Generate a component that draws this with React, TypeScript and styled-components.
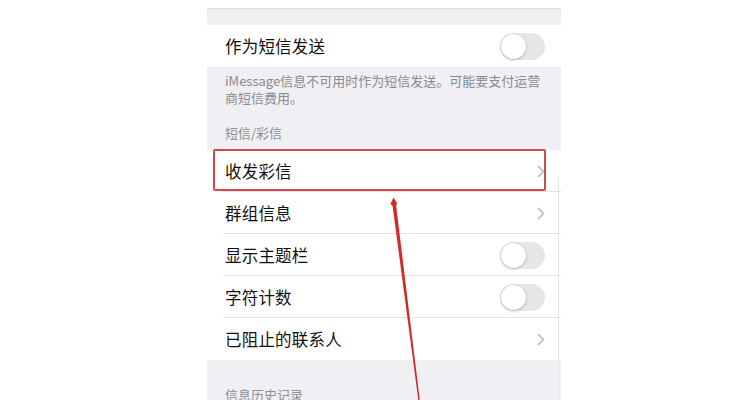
import React from "react";
import styled, { createGlobalStyle } from "styled-components";

const Global = createGlobalStyle`
  html, body { margin: 0; padding: 0; background: #ffffff; }
  body { font-family: "Noto Sans CJK SC", "Noto Sans", sans-serif; -webkit-font-smoothing: antialiased; }
`;

const Page = styled.div`
  position: relative;
  width: 750px;
  height: 400px;
  overflow: hidden;
  background: #ffffff;
  display: flex;
  padding-left: 207px;
  box-sizing: border-box;
`;

const Screen = styled.div`
  position: relative;
  width: 354px;
  height: 400px;
  background: #efeff4;
  display: flex;
  flex-direction: column;
`;

const TopStub = styled.div`
  height: 8px;
  background: #ffffff;
  border-bottom: 1px solid #dcdce0;
  flex: none;
`;

const Group = styled.div<{ $top: number }>`
  margin-top: ${(p) => p.$top}px;
  background: #ffffff;
  display: flex;
  flex-direction: column;
  flex: none;
`;

const Row = styled.div<{ $sep?: boolean }>`
  position: relative;
  height: 42px;
  display: flex;
  align-items: center;
  justify-content: space-between;
  padding: 0 16px 0 18px;
  box-sizing: border-box;
  &::after {
    content: "";
    display: ${(p) => (p.$sep ? "block" : "none")};
    position: absolute;
    left: 16px;
    right: 0;
    bottom: 0;
    height: 1px;
    background: #e2e2e5;
  }
`;

const Label = styled.span`
  font-size: 16.5px;
  color: #111111;
  letter-spacing: 0.2px;
`;

const Track = styled.div`
  width: 45px;
  height: 27px;
  border-radius: 14px;
  background: #e6e6e9;
  position: relative;
  flex: none;
`;

const Thumb = styled.div`
  position: absolute;
  left: 1px;
  top: 1px;
  width: 25px;
  height: 25px;
  border-radius: 50%;
  background: #ffffff;
  box-shadow: 0 1px 3px rgba(0, 0, 0, 0.22), 0 0 0 0.5px rgba(0, 0, 0, 0.05);
`;

const Footer = styled.div`
  margin: 5px 0 0;
  padding: 0 14px 0 18px;
  font-size: 13px;
  line-height: 17px;
  color: #8a8a8f;
  flex: none;
  white-space: nowrap;
`;

const Header = styled.div<{ $top: number }>`
  margin-top: ${(p) => p.$top}px;
  padding: 0 18px;
  font-size: 13px;
  line-height: 16px;
  color: #8e8e93;
  flex: none;
`;

const Highlight = styled.div`
  position: absolute;
  left: 6px;
  top: 149px;
  width: 333px;
  height: 42px;
  border: 2px solid #d4474a;
  border-radius: 2px;
  box-sizing: border-box;
  pointer-events: none;
`;

const EdgeLine = styled.div`
  position: absolute;
  left: 351px;
  top: 178px;
  width: 1px;
  bottom: 0;
  background: #e4e4e8;
`;

const ArrowSvg = styled.svg`
  position: absolute;
  left: 0;
  top: 0;
  pointer-events: none;
`;

const Chevron = () => (
  <svg width="8" height="13" viewBox="0 0 8 13">
    <path d="M1.5 1.5 L6.5 6.5 L1.5 11.5" fill="none" stroke="#c4c4c8" strokeWidth="1.8" strokeLinecap="round" strokeLinejoin="round" />
  </svg>
);

const Toggle = () => (
  <Track>
    <Thumb />
  </Track>
);

export default function App() {
  return (
    <>
      <Global />
      <Page>
        <Screen>
          <TopStub />
          <Group $top={16}>
            <Row>
              <Label>作为短信发送</Label>
              <Toggle />
            </Row>
          </Group>
          <Footer>
            iMessage信息不可用时作为短信发送。可能要支付运营
            <br />
            商短信费用。
          </Footer>
          <Header $top={19}>短信/彩信</Header>
          <Group $top={9}>
            <Row $sep>
              <Label>收发彩信</Label>
              <Chevron />
            </Row>
            <Row $sep>
              <Label>群组信息</Label>
              <Chevron />
            </Row>
            <Row $sep>
              <Label>显示主题栏</Label>
              <Toggle />
            </Row>
            <Row $sep>
              <Label>字符计数</Label>
              <Toggle />
            </Row>
            <Row>
              <Label>已阻止的联系人</Label>
              <Chevron />
            </Row>
          </Group>
          <Header $top={27}>信息历史记录</Header>
          <EdgeLine />
          <Highlight />
        </Screen>
        <ArrowSvg width="750" height="400" viewBox="0 0 750 400">
          <path
            d="M390.5 204 L393.5 197.5 L397 203 L396.2 206 L420 402 L418.6 402 L392.6 206 Z"
            fill="#d42a26"
          />
        </ArrowSvg>
      </Page>
    </>
  );
}
